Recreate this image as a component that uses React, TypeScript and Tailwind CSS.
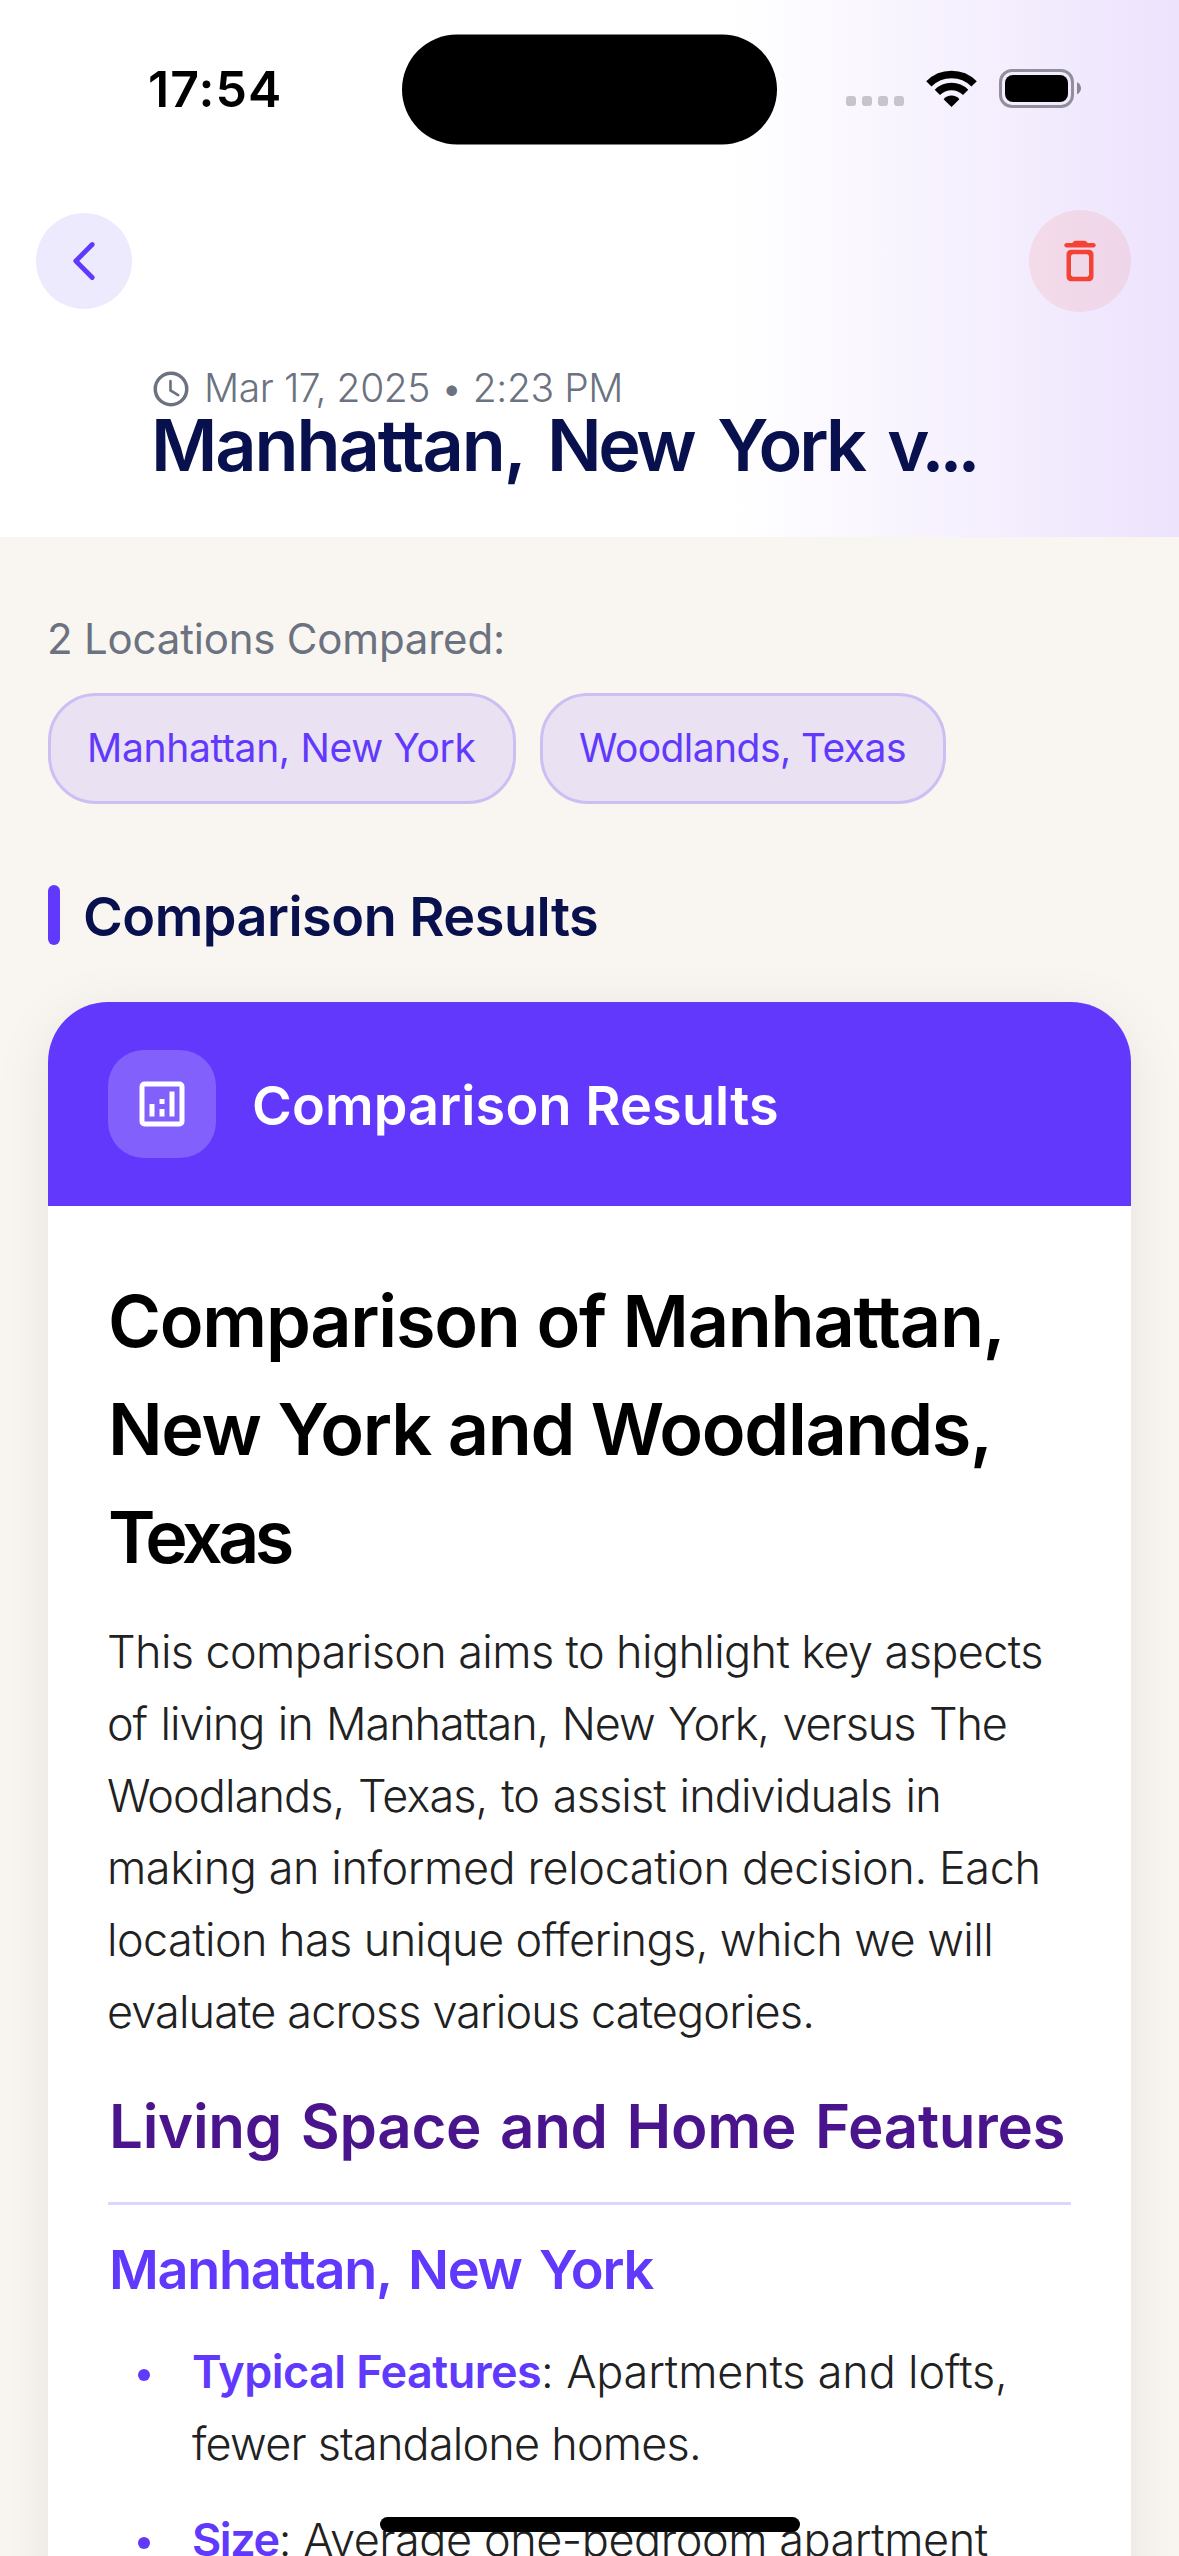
import React from 'react';

function WifiIcon() {
  return (
    <svg width="51" height="38" viewBox="0 0 51 38" fill="none" stroke="#000" strokeWidth="7.5">
      <path d="M2.87 13.87A32 32 0 0 1 48.13 13.87" />
      <path d="M11.36 22.36A20 20 0 0 1 39.64 22.36" />
      <path d="M25.5 37L17.6 29.2Q20.6 25.6 25.5 25.6T33.4 29.2Z" fill="#000" stroke="none" />
    </svg>
  );
}

function BatteryIcon() {
  return (
    <svg width="82" height="39" viewBox="0 0 82 39" fill="none">
      <rect x="1.5" y="1.5" width="72" height="36" rx="11.5" stroke="#928e9b" strokeWidth="3" />
      <rect x="6" y="6" width="63" height="27" rx="8" fill="#000" />
      <path d="M78 13.3c2.6 1.2 4 3.400 4 6s-1.400 4.800-4 6z" fill="#8a8693" />
    </svg>
  );
}

function StatusBar() {
  return (
    <div className="flex h-[177px] items-center">
      <div className="w-[402px] pl-[148px] text-[50px] leading-none font-semibold tracking-[1.09px] text-black">17:54</div>
      <div className="h-[110px] w-[375px] translate-y-[0.5px] rounded-full bg-black" />
      <div className="ml-[69px] flex gap-[6px] pt-[25px]">
        {[0, 1, 2, 3].map((i) => (
          <span key={i} className="h-[10px] w-[10px] rounded-[3px] bg-[#c7c4cc]" />
        ))}
      </div>
      <div className="ml-[22px] flex items-center gap-[22px]">
        <WifiIcon />
        <BatteryIcon />
      </div>
    </div>
  );
}

function Header() {
  return (
    <header className="h-[537px] bg-[linear-gradient(90deg,#ffffff_62%,#ede3fd_100%)]">
      <StatusBar />
      <div className="mt-[33px] flex h-[102px] items-center justify-between pr-12 pl-9">
        <button className="flex h-24 w-24 items-center justify-center rounded-full bg-[#eeeafe]">
          <svg width="54" height="54" viewBox="0 0 54 54" fill="none" stroke="#6139fc" strokeWidth="4.8" strokeLinecap="round" strokeLinejoin="round">
            <path d="M35.200 10.500L18.800 27L35.200 43.500" />
          </svg>
        </button>
        <button className="flex h-[102px] w-[102px] items-center justify-center rounded-full bg-[#f44336]/10">
          <svg width="54" height="54" viewBox="0 0 24 24" fill="#f44336">
            <path
              fillRule="evenodd"
              d="M6 19c0 1.1.9 2 2 2h8c1.1 0 2-.9 2-2V9c0-1.1-.9-2-2-2H8c-1.1 0-2 .9-2 2v10zM9 9h6c.55 0 1 .45 1 1v8c0 .55-.45 1-1 1H9c-.55 0-1-.45-1-1v-8c0-.55.45-1 1-1zM15.500 4l-.71-.71c-.18-.18-.44-.29-.7-.29H9.910c-.26 0-.52.11-.7.29L8.500 4H6c-.55 0-1 .45-1 1s.45 1 1 1h12c.55 0 1-.45 1-1s-.45-1-1-1h-2.500z"
            />
          </svg>
        </button>
      </div>
      <div className="mt-[52px] flex h-12 items-center pl-[150px] text-[#6b7280]">
        <svg width="42" height="42" viewBox="0 0 24 24" fill="none" stroke="currentColor" className="mt-[2px]">
          <circle cx="12" cy="12" r="9" strokeWidth="2" />
          <path d="M11.700 7.500V12.800L16.100 15.500" strokeWidth="1.500" strokeLinecap="round" />
        </svg>
        <span className="ml-[12px] text-[39px] leading-[48px] font-light tracking-[-0.4px] whitespace-nowrap">Mar 17, 2025 • 2:23 PM</span>
      </div>
      <h1 className="pl-[151px] text-[72px] leading-[66px] font-semibold tracking-[-2.1px] [word-spacing:8px] whitespace-nowrap text-[#08104d]">
        Manhattan, <span className="tracking-[-3.5px]">New</span> <span className="tracking-[-3px]">York </span>
        <span className="tracking-[-5px]">v...</span>
      </h1>
    </header>
  );
}

const paragraph = [
  { text: 'This comparison aims to highlight key aspects', cls: 'tracking-[-0.61px]' },
  { text: 'of living in Manhattan, New York, versus The', cls: 'tracking-[-1.09px] [word-spacing:2px]' },
  { text: 'Woodlands, Texas, to assist individuals in', cls: 'tracking-[-0.9px] [word-spacing:2px]' },
  { text: 'making an informed relocation decision. Each', cls: 'tracking-[-0.4px]' },
  { text: 'location has unique offerings, which we will', cls: 'tracking-[-0.58px]' },
  { text: 'evaluate across various categories.', cls: 'tracking-[-0.86px]' },
];

function Bullet({ children }: { children: React.ReactNode }) {
  return (
    <li className="flex pl-[30px]">
      <span className="mt-[33px] h-[12px] w-[12px] shrink-0 rounded-full bg-[#6139fc]" />
      <div className="ml-[42px] whitespace-nowrap">{children}</div>
    </li>
  );
}

function ResultsCard() {
  return (
    <section className="mt-[57px] h-[1700px] overflow-hidden rounded-[60px] bg-white shadow-[0_12px_60px_rgba(0,0,0,0.08)]">
      <div className="flex h-[204px] items-center bg-[#6239fc] pl-[60px]">
        <div className="flex h-[108px] w-[108px] items-center justify-center rounded-[36px] bg-white/20">
          <svg width="60" height="60" viewBox="0 0 24 24" fill="#fff">
            <path fillRule="evenodd" d="M5 3h14a2 2 0 0 1 2 2v14a2 2 0 0 1-2 2H5a2 2 0 0 1-2-2V5a2 2 0 0 1 2-2zM5 5v14h14V5z" />
            <path d="M7 12h2v5H7zM15 7h2v10h-2zM11 14h2v3h-2zM11 10h2v2h-2z" />
          </svg>
        </div>
        <h3 className="ml-[36px] pt-[3px] text-[54px] leading-[60px] font-semibold tracking-[0.14px] text-white">Comparison Results</h3>
      </div>
      <div className="px-[60px] pt-[61px] text-[45px] leading-[72px] font-light text-[#212121]">
        <h2 className="text-[72px] leading-[108px] font-semibold whitespace-nowrap text-black">
          <span className="block tracking-[-1.27px]">Comparison of Manhattan,</span>
          <span className="block tracking-[-1.33px]">New York and Woodlands,</span>
          <span className="block tracking-[-4.6px]">Texas</span>
        </h2>
        <p className="mt-[25px] -ml-px whitespace-nowrap">
          {paragraph.map((line) => (
            <span key={line.text} className={'block ' + line.cls}>{line.text}</span>
          ))}
        </p>
        <h3 className="mt-[33px] pl-px text-[60px] leading-[90px] font-semibold tracking-[-0.3px] [word-spacing:4px] whitespace-nowrap text-[#4a148c]">Living Space and Home Features</h3>
        <hr className="mt-[31px] h-[3px] border-0 bg-[#dcd5fe]" />
        <h4 className="mt-[24px] pl-px text-[54px] leading-[82px] font-semibold tracking-[-1.3px] [word-spacing:5px] text-[#6139fc]">Manhattan, New York</h4>
        <ul className="mt-[25px] flex flex-col gap-6">
          <Bullet>
            <div className="tracking-[-0.17px]">
              <b className="font-semibold tracking-[-0.58px] text-[#6139fc]">Typical Features</b>: Apartments and lofts,
            </div>
            <div className="tracking-[-0.8px]">fewer standalone homes.</div>
          </Bullet>
          <Bullet>
            <div className="tracking-[-0.44px]">
              <b className="font-semibold tracking-[-1.4px] text-[#6139fc]">Size</b>: Average one-bedroom apartment
            </div>
          </Bullet>
        </ul>
      </div>
    </section>
  );
}

export default function App() {
  return (
    <div className="relative h-[2556px] w-[1179px] overflow-hidden bg-[#f9f6f1] font-['Inter',sans-serif]">
      <Header />
      <main className="px-12 pt-[72px]">
        <p className="-ml-px text-[42px] leading-[60px] tracking-[-0.2px] text-[#6b7280]">2 Locations Compared:</p>
        <div className="mt-6 flex gap-6 text-[39px] text-[#6139fc]">
          <span className="flex h-[111px] w-[468px] items-center rounded-[48px] border-3 border-[#cdbff3] bg-[#eae1f2] pl-[36px] tracking-[-0.33px] whitespace-nowrap">Manhattan, New York</span>
          <span className="flex h-[111px] w-[406px] items-center rounded-[48px] border-3 border-[#cdbff3] bg-[#eae1f2] pl-[36px] tracking-[-0.56px] whitespace-nowrap">Woodlands, Texas</span>
        </div>
        <div className="mt-[81px] flex h-[60px] items-center">
          <span className="h-[60px] w-3 rounded-full bg-[#6139fc]" />
          <h2 className="ml-[23px] pt-[3px] text-[54px] leading-[60px] font-semibold tracking-[-0.5px] text-[#08104d]">Comparison Results</h2>
        </div>
        <ResultsCard />
      </main>
      <div className="absolute bottom-6 left-[380px] h-[15px] w-[420px] rounded-full bg-black" />
    </div>
  );
}
